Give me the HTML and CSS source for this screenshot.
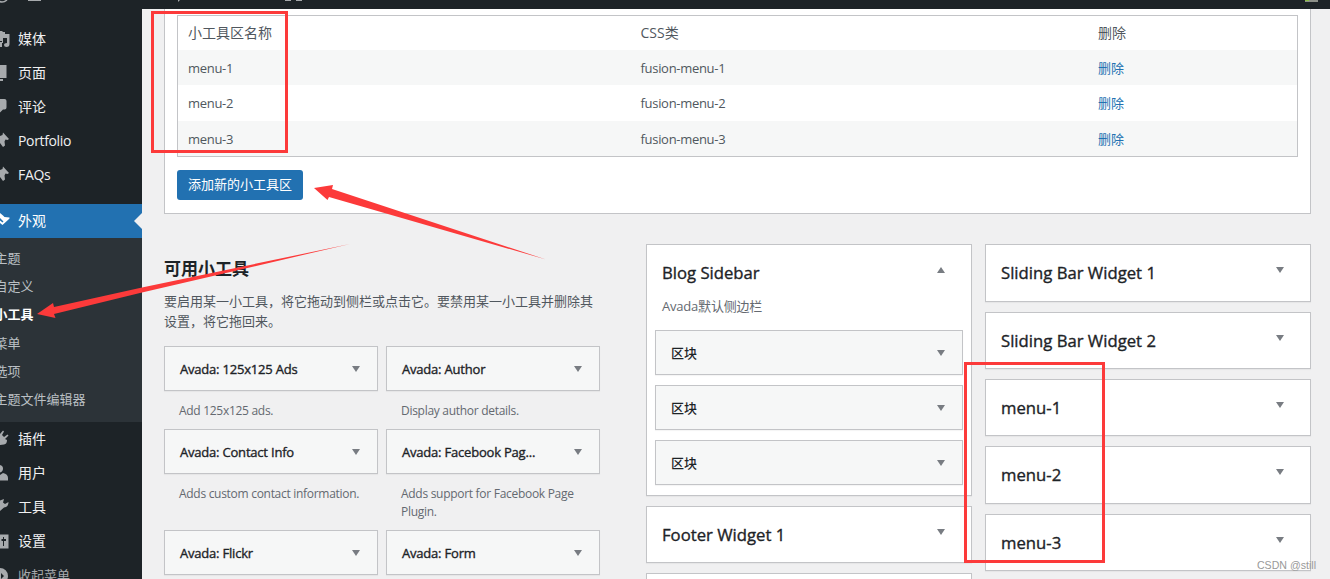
FILE: index.html
```
<!DOCTYPE html>
<html lang="zh-CN">
<head>
    <meta charset="UTF-8">
    <meta name="viewport" content="width=device-width, initial-scale=1.0">
    <title>小工具</title>
    <link rel="stylesheet" href="styles.css">
</head>
<body>
    <div class="adminbar">
        <svg width="1330" height="9" viewBox="0 0 1330 9">
            <path d="M-3 0Q2 4 7 0" fill="none" stroke="#a7aaad" stroke-width="1.5"/>
            <path d="M28 0h13v1H28zM178 0h2l-2 2zM285 0h6v1h-6zM296 0h6v1h-6z" fill="#a7aaad"/>
            <path d="M1305 0h13v2h-13z" fill="#8c8f88"/>
            <path d="M1305 0h4v1h-4z" fill="#8bbf45"/>
        </svg>
    </div>
    <div class="page">
        <div class="sidebar">
            <ul class="menu">
                <li class="first">文章</li>
                <li><svg class="icon" viewBox="0 0 10 20"><path d="M0 2h2l1 1h2v6H3v5H2v-2H0zM0 13h2v5H0zM4 5h5.500v10q0 3-3 3-2.500 0-2.500-2t3-2V9H4z"/></svg>媒体</li>
                <li><svg class="icon" viewBox="0 0 10 20"><path d="M0 2h6.500v13H0zM0 16h3v2H0z"/></svg>页面</li>
                <li><svg class="icon" viewBox="0 0 10 20"><path d="M0 2h4.500q2 0 2 2v6.500q0 2-2 2H3l-3 3z"/></svg>评论</li>
                <li><svg class="icon" viewBox="0 0 10 20"><path d="M3 1.500l6 6.500-1.500 1-2-.5-1 2 .5 4-2 1.500L0 12V5l2.500-1z"/></svg><span class="en">Portfolio</span></li>
                <li><svg class="icon" viewBox="0 0 10 20"><path d="M3 1.500l6 6.500-1.500 1-2-.5-1 2 .5 4-2 1.500L0 12V5l2.500-1z"/></svg><span class="en">FAQs</span></li>
                <li class="current"><svg class="icon" viewBox="0 0 10 20"><path d="M0 2l3 2.500L4.500 6l5 .5q.5 1-1 2L2.500 14 0 12V9.500l2.500 2 1-1L0 7z"/></svg>外观</li>
            </ul>
            <ul class="submenu">
                <li>主题</li>
                <li>自定义</li>
                <li class="active">小工具</li>
                <li>菜单</li>
                <li>选项</li>
                <li>主题文件编辑器</li>
            </ul>
            <ul class="menu">
                <li><svg class="icon" viewBox="0 0 10 20"><path d="M0 5l3-3.500 1 1L2 6l2 2 3.500-2.500 1 1L5 10l2 1q0 4-3 4.500L0 16z"/></svg>插件</li>
                <li><svg class="icon" viewBox="0 0 10 20"><path d="M0 2q3 .5 3 3.500T0 9.500zM0 12l3-2q5 1 5 5v2.500H0z"/></svg>用户</li>
                <li><svg class="icon" viewBox="0 0 10 20"><path d="M0 3.500L4 2 3 5.500l2 1.500 3.500-2q0 5-4.500 5.500L0 14z"/></svg>工具</li>
                <li><svg class="icon" viewBox="0 0 10 20"><path fill-rule="evenodd" d="M0 3.500h8.500v14H0zM3 6v2H1.500v2H3v5h1v-5h2V8H4V6z"/></svg>设置</li>
                <li class="collapse"><svg class="icon" viewBox="0 0 10 20"><path fill-rule="evenodd" d="M0 2a8 8 0 0 1 0 16zM1 7v6l3-3z"/></svg>收起菜单</li>
            </ul>
        </div>
        <div class="content">
            <div class="panel">
                <div class="table">
                    <div class="row"><span>小工具区名称</span><span>CSS类</span><span>删除</span></div>
                    <div class="row alt"><span class="en">menu-1</span><span class="en">fusion-menu-1</span><a>删除</a></div>
                    <div class="row tall"><span class="en">menu-2</span><span class="en">fusion-menu-2</span><a>删除</a></div>
                    <div class="row alt"><span class="en">menu-3</span><span class="en">fusion-menu-3</span><a>删除</a></div>
                </div>
                <button class="add">添加新的小工具区</button>
            </div>
            <div class="columns">
                <div class="available">
                    <h2>可用小工具</h2>
                    <p class="intro">要启用某一小工具，将它拖动到侧栏或点击它。要禁用某一小工具并删除其<br>设置，将它拖回来。</p>
                    <div class="widgets">
                        <div class="item">
                            <div class="widget"><span class="en">Avada: 125x125 Ads</span><i class="arrow"></i></div>
                            <p>Add 125x125 ads.</p>
                        </div>
                        <div class="item">
                            <div class="widget"><span class="en">Avada: Author</span><i class="arrow"></i></div>
                            <p>Display author details.</p>
                        </div>
                        <div class="item">
                            <div class="widget"><span class="en">Avada: Contact Info</span><i class="arrow"></i></div>
                            <p>Adds custom contact information.</p>
                        </div>
                        <div class="item">
                            <div class="widget"><span class="en">Avada: Facebook Pag...</span><i class="arrow"></i></div>
                            <p>Adds support for Facebook Page<br>Plugin.</p>
                        </div>
                        <div class="item">
                            <div class="widget"><span class="en">Avada: Flickr</span><i class="arrow"></i></div>
                        </div>
                        <div class="item">
                            <div class="widget"><span class="en">Avada: Form</span><i class="arrow"></i></div>
                        </div>
                    </div>
                </div>
                <div class="areas">
                    <div class="area open">
                        <h3>Blog Sidebar<i class="arrow up"></i></h3>
                        <p>Avada默认侧边栏</p>
                        <div class="widget">区块<i class="arrow"></i></div>
                        <div class="widget">区块<i class="arrow"></i></div>
                        <div class="widget">区块<i class="arrow"></i></div>
                    </div>
                    <div class="area"><h3>Footer Widget 1<i class="arrow"></i></h3></div>
                    <div class="area"></div>
                </div>
                <div class="areas">
                    <div class="area tall"><h3>Sliding Bar Widget 1<i class="arrow"></i></h3></div>
                    <div class="area"><h3>Sliding Bar Widget 2<i class="arrow"></i></h3></div>
                    <div class="area"><h3>menu-1<i class="arrow"></i></h3></div>
                    <div class="area tall"><h3>menu-2<i class="arrow"></i></h3></div>
                    <div class="area"><h3>menu-3<i class="arrow"></i></h3></div>
                </div>
            </div>
        </div>
    </div>
    <!-- red marks over the page -->
    <svg class="marks" width="1330" height="579" viewBox="0 0 1330 579">
        <rect x="152.500" y="12.500" width="134" height="139"/>
        <rect x="965.500" y="363.500" width="138" height="198"/>
        <path d="M314 188L333 185L332 189L546 259.500L329 197L327.500 200Z"/>
        <path d="M37 314L53 303L54 307L142 287.500L350 244L142 292.500L54 314L55.500 318Z"/>
    </svg>
    <div class="watermark">CSDN @still</div>
</body>
</html>
```
FILE: styles.css
```
* {
    box-sizing: border-box;
}
body {
    margin: 0;
    width: 1330px;
    height: 579px;
    overflow: hidden;
    position: relative;
    background: #f0f0f1;
    color: #50575e;
    font-family: "Open Sans", "Noto Sans CJK SC", sans-serif;
    font-size: 13px;
}
ul, p, h2, h3 {
    margin: 0;
    padding: 0;
    list-style: none;
}
.en {
    letter-spacing: -0.3px;
}
.adminbar {
    height: 9px;
    background: #1d2327;
}
.adminbar svg {
    display: block;
}
.page {
    display: flex;
    height: 570px;
    overflow: hidden;
}
.sidebar {
    width: 142px;
    height: 570px;
    flex: none;
    overflow: hidden;
    background: #1d2327;
}
.menu li {
    display: flex;
    align-items: center;
    height: 34px;
    padding-bottom: 2px;
    font-size: 14px;
    color: #f0f0f1;
    white-space: nowrap;
}
.menu .first {
    margin-top: -21px;
    padding-left: 18px;
    padding-bottom: 8px;
}
.menu .en {
    letter-spacing: -0.35px;
}
.icon {
    width: 10px;
    height: 20px;
    margin-right: 8px;
    margin-top: 2px;
    fill: #a7aaad;
}
.menu .current {
    position: relative;
    margin-top: 12px;
    background: #2271b1;
    color: #fff;
}
.menu .current .icon {
    fill: #fff;
}
.current::after {
    content: "";
    position: absolute;
    right: 0;
    top: 9px;
    border: 8px solid transparent;
    border-left: 0;
    border-right-color: #f0f0f1;
}
.menu .collapse {
    padding-bottom: 1px;
    color: #a7aaad;
    font-size: 13px;
}
.submenu {
    height: 184px;
    padding-top: 6px;
    background: #2c3338;
    color: #bbc0c4;
}
.submenu li {
    height: 28.200px;
    line-height: 28.200px;
    margin-left: -5.500px;
    white-space: nowrap;
}
.submenu .active {
    color: #fff;
    font-weight: bold;
}
.content {
    flex: none;
    width: 1169px;
    padding-left: 22px;
}
.panel {
    height: 205px;
    padding: 6px 12px;
    background: #fff;
    border: 1px solid #c3c4c7;
    border-top: 0;
}
.table {
    width: 1121px;
    border: 1px solid #c3c4c7;
}
.row {
    display: grid;
    grid-template-columns: 452.500px 457.500px 1fr;
    align-items: center;
    height: 35px;
    padding-left: 10px;
}
.row:first-child {
    height: 34px;
    padding-bottom: 2px;
    font-size: 14px;
}
.row.alt {
    background: #f6f7f7;
}
.row.tall {
    height: 36px;
}
.row a {
    margin-top: -1px;
    color: #2271b1;
}
.add {
    display: block;
    width: 126px;
    height: 30px;
    margin-top: 13px;
    padding: 0 0 3px;
    border: 0;
    border-radius: 3px;
    background: #2271b1;
    color: #fff;
    font-family: inherit;
    font-size: 13px;
}
.columns {
    display: flex;
    padding-top: 30px;
}
.available {
    width: 436px;
    margin-right: 46px;
}
.available h2 {
    margin-top: 13px;
    font-size: 17px;
    line-height: 24px;
    color: #1d2327;
}
.intro {
    margin-top: 11px;
    line-height: 19.500px;
    white-space: nowrap;
}
.widgets {
    display: grid;
    grid-template-columns: 214px 214px;
    grid-template-rows: 83px 101px 45px;
    column-gap: 8px;
    margin-top: 15px;
}
.widget {
    display: flex;
    justify-content: space-between;
    align-items: center;
    height: 45px;
    padding: 0 17px 0 15px;
    background: #f6f7f7;
    border: 1px solid #c3c4c7;
    box-shadow: 0 1px 1px rgba(0, 0, 0, 0.04);
    color: #1d2327;
    font-weight: 500;
    white-space: nowrap;
}
.widget .en {
    letter-spacing: -0.2px;
    -webkit-text-stroke: 0.35px #1d2327;
}
.item p {
    padding: 11px 0 0 15px;
    font-size: 12px;
    line-height: 18px;
    letter-spacing: -0.29px;
    color: #646970;
    white-space: nowrap;
}
.arrow {
    border: 4px solid transparent;
    border-top: 6px solid #787c82;
    border-bottom: 0;
}
.arrow.up {
    border-top: 0;
    border-bottom: 6px solid #787c82;
}
.areas {
    width: 326px;
    margin-right: 13px;
}
.areas:last-child {
    margin-right: 0;
}
.area {
    height: 57px;
    margin-bottom: 10px;
    padding: 0 8px;
    background: #fff;
    border: 1px solid #c3c4c7;
    box-shadow: 0 1px 1px rgba(0, 0, 0, 0.04);
}
.area.tall {
    height: 58px;
}
.area.open {
    height: 252px;
}
.area h3 {
    display: flex;
    justify-content: space-between;
    padding: 16px 18px 0 7px;
    line-height: 24px;
    font-size: 16.700px;
    font-weight: 500;
    color: #1d2327;
    -webkit-text-stroke: 0.35px #1d2327;
}
.area h3 .arrow {
    align-self: flex-start;
    margin-top: 6px;
}
.area p {
    padding: 12px 0 0 7px;
    line-height: 18px;
    letter-spacing: -0.2px;
    color: #646970;
}
.area .widget {
    margin-bottom: 10px;
}
.area p + .widget {
    margin-top: 15px;
}
.marks {
    position: absolute;
    left: 0;
    top: 0;
}
.marks rect {
    fill: none;
    stroke: #fc3a3a;
    stroke-width: 3;
}
.marks path {
    fill: #fc3a3a;
}
.watermark {
    position: absolute;
    right: 14px;
    bottom: 7px;
    font-family: "Liberation Sans", sans-serif;
    font-size: 10.600px;
    line-height: 14px;
    color: #999;
}
```
